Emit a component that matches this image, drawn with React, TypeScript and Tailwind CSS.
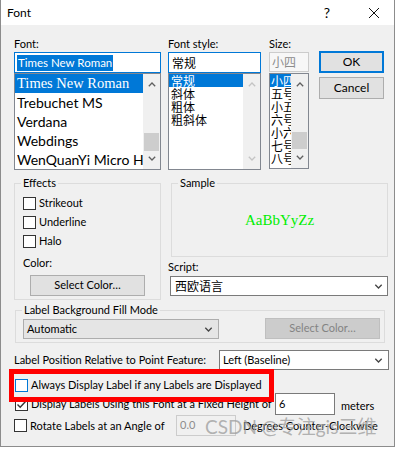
import type { ReactNode } from 'react'

const ui = "font-['Lato','Noto_Sans_CJK_SC',sans-serif]"
const cjk = "font-['Noto_Sans_CJK_SC',sans-serif] text-[12px]"

function Chevron({ up = false, color = '#606060', w = 8, h = 5 }: { up?: boolean; color?: string; w?: number; h?: number }) {
  return (
    <svg width={w} height={h} viewBox="0 0 8 5" className="block">
      <polyline
        points={up ? '0.8,4.2 4,1 7.2,4.2' : '0.8,0.8 4,4 7.2,0.8'}
        fill="none"
        stroke={color}
        strokeWidth="1.3"
      />
    </svg>
  )
}

function Checkbox({ checked = false, focus = false }: { checked?: boolean; focus?: boolean }) {
  return (
    <div
      className={`flex h-[13px] w-[13px] shrink-0 items-center justify-center border bg-white ${
        focus ? 'border-[#0078d7]' : 'border-[#333333]'
      }`}
    >
      {checked && (
        <svg width="11" height="11" viewBox="0 0 11 11">
          <polyline points="1.5,5.5 4.2,8.2 9.5,2.5" fill="none" stroke="#333" strokeWidth="1.4" />
        </svg>
      )}
    </div>
  )
}

function Group({ label, className, children }: { label: string; className: string; children?: ReactNode }) {
  return (
    <div className={`relative border border-[#dcdcdc] ${className}`}>
      <span className="absolute -top-[9px] left-[6px] bg-[#f0f0f0] px-[2px] leading-[16px]">{label}</span>
      {children}
    </div>
  )
}

function Scrollbar({ thumb, disabled = false }: { thumb?: [number, number]; disabled?: boolean }) {
  const c = disabled ? '#c4c4c4' : '#606060'
  return (
    <div className="relative flex h-full w-[17px] shrink-0 flex-col items-center justify-between bg-[#f0f0f0] py-[8px]">
      <Chevron up color={c} />
      {thumb && (
        <div
          className="absolute left-[1px] w-[15px] bg-[#cdcdcd]"
          style={{ top: thumb[0], height: thumb[1] }}
        />
      )}
      <Chevron color={c} />
    </div>
  )
}

export default function App() {
  const fonts = [
    { name: 'Times New Roman', cls: "font-['Liberation_Serif',serif] text-[14.5px]", sel: true },
    { name: 'Trebuchet MS', cls: 'text-[14px]' },
    { name: 'Verdana', cls: 'text-[14px]' },
    { name: 'Webdings', cls: 'text-[14px]' },
    { name: 'WenQuanYi Micro H', cls: 'text-[14px]' },
  ]
  const styles = ['常规', '斜体', '粗体', '粗斜体']
  const sizes = ['小四', '五号', '小五', '六号', '小六', '七号', '八号']

  return (
    <div className={`relative h-[452px] w-[399px] overflow-hidden bg-white text-[11px] text-black ${ui}`}>
      <div className="h-[447px] w-[395px] border-x border-b border-[#8c8c8c]">
        {/* title bar */}
        <div className="flex h-[25px] items-center bg-white pl-[6px]">
          <span className="text-[12px] leading-[16px]">Font</span>
          <span className="ml-auto text-[14px] leading-[16px]">?</span>
          <svg width="12" height="12" viewBox="0 0 12 12" className="ml-[38px] mr-[14px]">
            <path d="M1 1 L11 11 M11 1 L1 11" stroke="#111" strokeWidth="1" />
          </svg>
        </div>

        <div className="h-[421px] bg-[#f0f0f0] pl-[13px] pt-[11px]">
          {/* top row */}
          <div className="flex">
            <div className="w-[147px]">
              <div className="h-[16px] leading-[16px]">Font:</div>
              <div className="flex h-[21px] items-center border border-[#0078d7] bg-white px-[2px]">
                <span className="bg-[#0078d7] px-[1px] text-[11.5px] leading-[16px] text-white">Times New Roman</span>
              </div>
              <div className="flex h-[97px] border border-[#828790] bg-white">
                <div className="w-[128px] overflow-hidden">
                  {fonts.map((f) => (
                    <div
                      key={f.name}
                      className={`h-[19px] whitespace-nowrap pl-[2px] leading-[19px] ${f.cls} ${
                        f.sel ? 'bg-[#0078d7] text-white' : ''
                      }`}
                    >
                      {f.name}
                    </div>
                  ))}
                </div>
                <Scrollbar thumb={[59, 18]} />
              </div>
            </div>

            <div className="ml-[7px] w-[93px]">
              <div className="h-[16px] leading-[16px]">Font style:</div>
              <div className={`flex h-[21px] items-center border border-[#0078d7] bg-white px-[3px] ${cjk}`}>常规</div>
              <div className="flex h-[97px] border border-[#828790] bg-white">
                <div className={`w-[74px] ${cjk}`}>
                  {styles.map((s, i) => (
                    <div
                      key={s}
                      className={`h-[13px] pl-[2px] leading-[13px] ${i === 0 ? 'bg-[#0078d7] text-white' : ''}`}
                    >
                      {s}
                    </div>
                  ))}
                </div>
                <Scrollbar disabled />
              </div>
            </div>

            <div className="ml-[8px] w-[40px]">
              <div className="h-[16px] leading-[16px]">Size:</div>
              <div className={`flex h-[20px] items-center border border-[#cccccc] bg-[#f7f7f7] px-[2px] text-[#8c8c8c] ${cjk}`}>
                小四
              </div>
              <div className="mt-[1px] flex h-[96px] border border-[#828790] bg-white">
                <div className={`w-[21px] overflow-hidden ${cjk}`}>
                  {sizes.map((s, i) => (
                    <div
                      key={s}
                      className={`h-[13px] whitespace-nowrap pl-[1px] leading-[13px] ${
                        i === 0 ? 'bg-[#0078d7] text-white' : ''
                      }`}
                    >
                      {s}
                    </div>
                  ))}
                </div>
                <Scrollbar thumb={[58, 17]} />
              </div>
            </div>

            <div className="ml-[10px] w-[65px] pt-[15px]">
              <div className="flex h-[22px] items-center justify-center border-2 border-[#0078d7] bg-[#e1e1e1] text-[12px]">
                OK
              </div>
              <div className="mt-[4px] flex h-[22px] items-center justify-center border border-[#adadad] bg-[#e1e1e1] text-[12px]">
                Cancel
              </div>
            </div>
          </div>

          {/* effects + sample */}
          <div className="mt-[13px] flex">
            <Group label="Effects" className="h-[117px] w-[147px] pl-[8px] pt-[13px]">
              {['Strikeout', 'Underline', 'Halo'].map((t) => (
                <div key={t} className="flex h-[19px] items-start gap-[3px]">
                  <Checkbox />
                  <span className="-mt-[2px] leading-[16px]">{t}</span>
                </div>
              ))}
              <div className="mt-[1px] leading-[16px]">Color:</div>
              <div className="ml-[7px] mt-[4px] flex h-[21px] w-[115px] items-center justify-center border border-[#adadad] bg-[#e1e1e1]">
                Select Color…
              </div>
            </Group>

            <div className="ml-[7px] w-[220px]">
              <Group label="Sample" className="ml-[3px] flex h-[74px] w-[217px] items-center justify-center">
                <span className="font-['Liberation_Serif',serif] text-[15px] text-[#00ee00]">AaBbYyZz</span>
              </Group>
              <div className="mt-[2px] h-[17px] leading-[16px]">Script:</div>
              <div className="ml-[2px] flex h-[20px] w-[218px] items-center border border-[#7a7a7a] bg-white pl-[4px] pr-[4px]">
                <span className={cjk}>西欧语言</span>
                <span className="ml-auto">
                  <Chevron color="#444" w={9} />
                </span>
              </div>
            </div>
          </div>

          {/* background fill mode */}
          <Group label="Label Background Fill Mode" className="ml-[1px] mt-[10px] flex h-[33px] w-[370px] items-center pl-[7px] pr-[4px]">
            <div className="mt-[5px] flex h-[20px] w-[196px] items-center border border-[#adadad] bg-[#e5e5e5] pl-[3px] pr-[5px]">
              <span>Automatic</span>
              <span className="ml-auto">
                <Chevron color="#444" w={9} />
              </span>
            </div>
            <div className="ml-auto mt-[3px] flex h-[21px] w-[115px] items-center justify-center border border-[#bfbfbf] bg-[#cccccc] text-[#838383]">
              Select Color…
            </div>
          </Group>

          {/* label position */}
          <div className="mt-[7px] flex w-[375px] items-center justify-between">
            <span className="whitespace-nowrap leading-[16px]">Label Position Relative to Point Feature:</span>
            <div className="flex h-[20px] w-[170px] shrink-0 items-center border border-[#7a7a7a] bg-white pl-[3px] pr-[5px]">
              <span>Left (Baseline)</span>
              <span className="ml-auto">
                <Chevron color="#444" w={9} />
              </span>
            </div>
          </div>

          {/* checkbox rows */}
          <div className="ml-[1px] mt-[7px] flex h-[16px] items-center gap-[3px]">
            <Checkbox focus />
            <span className="leading-[16px]">Always Display Label if any Labels are Displayed</span>
          </div>
          <div className="ml-[1px] flex h-[22px] items-center">
            <Checkbox checked />
            <span className="ml-[3px] w-[244px] whitespace-nowrap leading-[16px]">
              Display Labels Using this Font at a Fixed Height of
            </span>
            <div className="flex h-[22px] w-[60px] shrink-0 items-center border border-[#7a7a7a] bg-white pl-[3px]">6</div>
            <span className="ml-[6px] mt-[3px] leading-[16px]">meters</span>
          </div>
          <div className="flex h-[21px] items-center">
            <Checkbox />
            <span className="ml-[3px] w-[146px] whitespace-nowrap leading-[16px]">Rotate Labels at an Angle of</span>
            <div className="flex h-[21px] w-[60px] shrink-0 items-center border border-[#cccccc] bg-[#f0f0f0] pl-[3px] text-[#8c8c8c]">
              0.0
            </div>
            <span className="ml-[7px] whitespace-nowrap leading-[16px]">Degrees Counter-Clockwise</span>
          </div>
        </div>
      </div>

      {/* annotation overlay */}
      <div className="absolute left-[9px] top-[369px] h-[33px] w-[265px] border-[5px] border-[#ff0000]" />
      {/* watermark */}
      <div className={`absolute left-[205px] top-[414px] text-[19px] leading-[26px] text-[#a0a0a0]/80 ${ui}`}>
        CSDN @专注gis三维
      </div>
    </div>
  )
}
